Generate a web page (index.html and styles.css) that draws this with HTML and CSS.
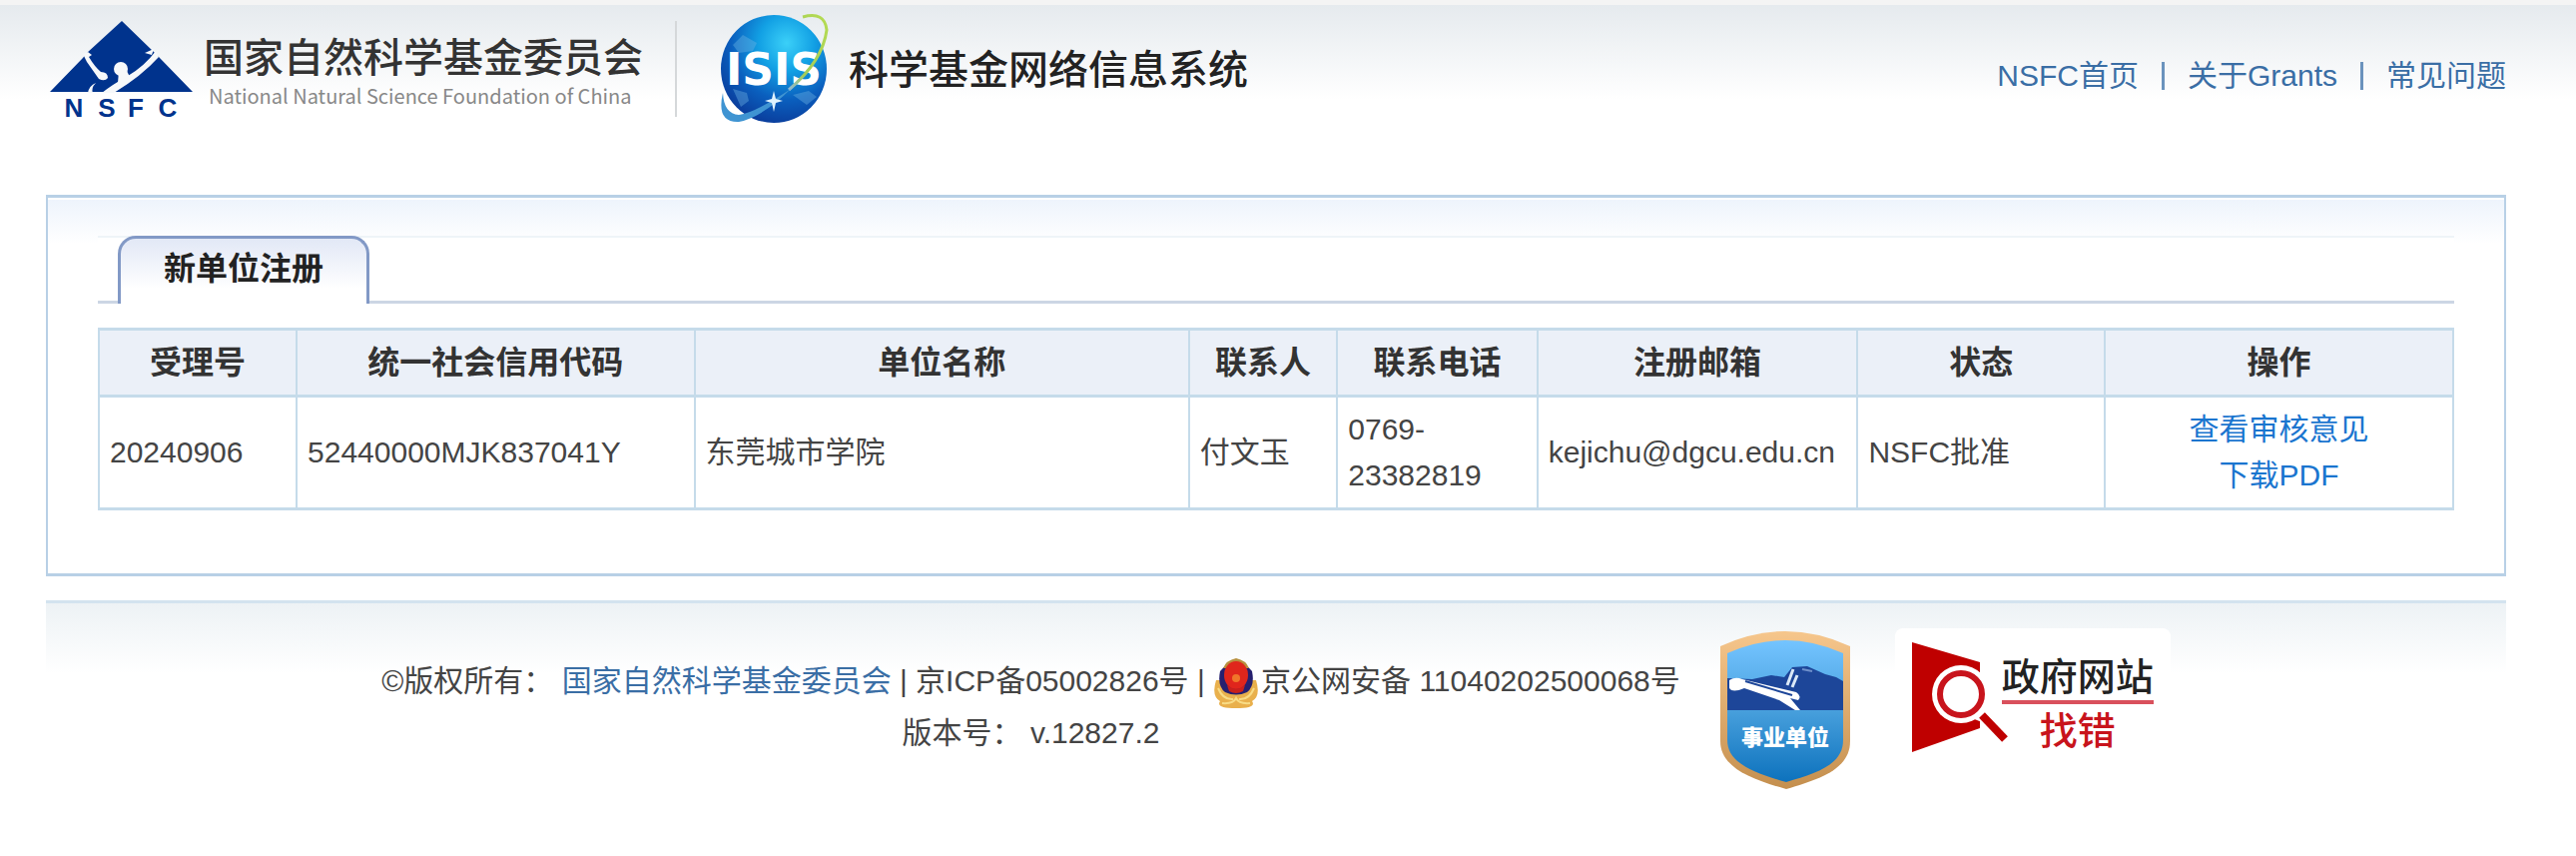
FILE: index.html
```html
<!DOCTYPE html>
<html lang="zh-CN">
<head>
    <meta charset="UTF-8">
    <meta name="viewport" content="width=device-width, initial-scale=1.0">
    <title>科学基金网络信息系统</title>
    <link rel="stylesheet" href="styles.css">
</head>
<body>
    <header class="header">
        <div class="brand">
            <svg class="logo-nsfc" viewBox="0 0 144 110" aria-label="NSFC">
                <path fill="#00338d" d="M72 0 L104 31 L109 36 L143 71 H0 L33 37 L37 32 Z"/>
                <!-- figura branca com os braços abertos -->
                <path fill="#f6f8fa" d="M106 30 Q95 45 78 55 Q62 64 52 72 H64 Q92 55 109 36 Z"/>
                <path fill="#f6f8fa" d="M33 33 L38 31 L42 34 L39 36 Q45 46 51 51 Q58 51 58 57 Q55 61 49 58 L37 41 Z"/>
                <path fill="#f6f8fa" d="M104 28 L95 32 L102 34 Z"/>
                <circle cx="71" cy="48" r="7" fill="#f6f8fa"/>
                <path fill="#f6f8fa" d="M69 50 H77 L80 56 L68 62 Z"/>
                <path fill="#f6f8fa" d="M38 72 Q39 65 46 62 Q41 67 43 72 Z"/>
                <g class="logo-nsfc-text">
                    <text x="24" y="96">N</text>
                    <text x="57" y="96">S</text>
                    <text x="86" y="96">F</text>
                    <text x="118" y="96">C</text>
                </g>
            </svg>
            <div class="brand-name">
                <span class="brand-cn">国家自然科学基金委员会</span>
                <span class="brand-en">National Natural Science Foundation of China</span>
            </div>
            <span class="brand-line"></span>
            <svg class="logo-isis" viewBox="0 0 112 112" aria-label="ISIS">
                <defs>
                    <radialGradient id="globe" cx="62%" cy="26%" r="75%">
                        <stop offset="0" stop-color="#3bd0f8"/>
                        <stop offset="0.35" stop-color="#12a0e4"/>
                        <stop offset="0.7" stop-color="#0a5fbe"/>
                        <stop offset="1" stop-color="#0a3f9e"/>
                    </radialGradient>
                    <linearGradient id="orbit" x1="1" y1="0" x2="0" y2="1">
                        <stop offset="0" stop-color="#b5dc52"/>
                        <stop offset="0.7" stop-color="#a3cc5a"/>
                        <stop offset="1" stop-color="#8fb8d8"/>
                    </linearGradient>
                </defs>
                <ellipse cx="55" cy="56" rx="53" ry="54" fill="url(#globe)"/>
                <path fill="#6fb4e4" opacity="0.4" d="M14 32 L24 22 L38 30 L34 38 L20 40 Z M14 76 L28 80 L30 88 L22 94 Z M74 82 L90 78 L98 84 L88 92 Z"/>
                <text class="logo-isis-text" x="55" y="72">ISIS</text>
                <path fill="none" stroke="url(#orbit)" stroke-width="3" d="M84 4 Q106 -2 108 17 Q104 48 70 77"/>
                <path fill="#3f94d2" d="M4 80 Q5 101 20 102 Q36 100 72 76 Q44 104 20 109 Q-3 110 4 80 Z"/>
                <path fill="#dff2fd" d="M55 78 L57 86 L64 88 L57 90 L55 99 L53 90 L46 88 L53 86 Z"/>
            </svg>
            <span class="system-name">科学基金网络信息系统</span>
        </div>
        <nav class="nav">
            <a href="#">NSFC首页</a>
            <a href="#">关于Grants</a>
            <a href="#">常见问题</a>
        </nav>
    </header>

    <main class="panel">
        <div class="tabs">
            <h1 class="tab">新单位注册</h1>
        </div>
        <table class="list">
            <thead>
                <tr>
                    <th class="w-no">受理号</th>
                    <th class="w-code">统一社会信用代码</th>
                    <th class="w-name">单位名称</th>
                    <th class="w-contact">联系人</th>
                    <th class="w-phone">联系电话</th>
                    <th class="w-mail">注册邮箱</th>
                    <th class="w-status">状态</th>
                    <th>操作</th>
                </tr>
            </thead>
            <tbody>
                <tr>
                    <td>20240906</td>
                    <td>52440000MJK837041Y</td>
                    <td>东莞城市学院</td>
                    <td>付文玉</td>
                    <td>0769-23382819</td>
                    <td>kejichu@dgcu.edu.cn</td>
                    <td>NSFC批准</td>
                    <td class="actions">
                        <a href="#">查看审核意见</a><br>
                        <a href="#">下载PDF</a>
                    </td>
                </tr>
            </tbody>
        </table>
    </main>

    <footer class="footer">
        <div class="copyright">
            <p>©版权所有： <a href="#">国家自然科学基金委员会</a> | 京ICP备05002826号 |
                <svg class="police" viewBox="0 0 46 50" aria-hidden="true">
                    <path fill="#e9b04c" d="M3 22 Q-2 38 7 43 Q2 50 23 50 Q44 50 39 43 Q48 38 43 22 Z"/>
                    <path fill="none" stroke="#f8dc86" stroke-width="2" d="M5 30 Q10 42 20 41 M41 30 Q36 42 26 41 M9 45 Q20 46 23 40 Q26 46 37 45"/>
                    <path fill="#26206f" d="M7 13 Q23 -6 39 13 Q42 28 34 34 Q23 39 12 34 Q4 28 7 13 Z"/>
                    <path fill="#b8903f" d="M23 0 Q33 2 36 10 L10 10 Q13 2 23 0 Z"/>
                    <ellipse cx="23" cy="17" rx="12" ry="14" fill="#e0261c"/>
                    <circle cx="23" cy="20" r="4" fill="#f0752a"/>
                    <path fill="#c9201c" d="M14 27 Q23 34 32 27 L30 33 Q23 37 16 33 Z"/>
                </svg>京公网安备 11040202500068号</p>
            <p>版本号： v.12827.2</p>
        </div>
        <svg class="shield" viewBox="0 0 130 158" aria-label="事业单位">
            <defs>
                <linearGradient id="rim" x2="0" y2="1">
                    <stop offset="0" stop-color="#f6c68c"/>
                    <stop offset="1" stop-color="#c48f4e"/>
                </linearGradient>
                <linearGradient id="sky" x2="0" y2="1">
                    <stop offset="0" stop-color="#74c4ff"/>
                    <stop offset="0.5" stop-color="#479fdc"/>
                    <stop offset="1" stop-color="#0d72bd"/>
                </linearGradient>
            </defs>
            <path fill="url(#rim)" d="M0 15 Q65 -15 130 15 V110 C130 138 100 148 66 158 C30 148 0 136 0 110 Z"/>
            <path fill="url(#sky)" d="M7 22 Q65 -4 123 22 V109 C123 134 96 142 66 151 C34 142 7 132 7 109 Z"/>
            <path fill="#1d4699" d="M7 47 L32 48 L51 44 L64 46 L72 36 L87 35 L105 43 L116 46 L123 50 V79 H7 Z"/>
            <path fill="#fff" d="M9 49 Q15 45 22 48 L76 61 Q82 65 78 69 L70 67 L80 79 H75 L59 69 L24 57 Q12 62 9 57 Z"/>
            <path fill="none" stroke="#1d4699" stroke-width="2" d="M25 50 L72 64"/>
            <path fill="none" stroke="#dbe9f7" stroke-width="3" d="M73 38 L67 54 M77 44 L72 56"/>
            <path fill="none" stroke="#6e8fca" stroke-width="2" d="M82 38 L92 40"/>
            <text class="shield-text" x="65" y="114">事业单位</text>
        </svg>
        <div class="report">
            <svg class="report-icon" viewBox="0 0 96 110" aria-hidden="true">
                <path fill="#bf0000" d="M0 0 L68 20 V86 L0 110 Z"/>
                <circle cx="49" cy="52" r="29" fill="#fff"/>
                <path fill="#fff" d="M64 30 H70 V80 L60 76 Z"/>
                <circle cx="49" cy="52" r="21" fill="#fff" stroke="#c8141c" stroke-width="6"/>
                <path stroke="#bf0000" stroke-width="8" d="M70 73 L93 97"/>
            </svg>
            <div class="report-text">
                <span class="report-site">政府网站</span>
                <span class="report-find">找错</span>
            </div>
        </div>
    </footer>
</body>
</html>
```
FILE: styles.css
```css
* {
    box-sizing: border-box;
}

body {
    margin: 0;
    padding: 0 70px 0 46px;
    border-top: 5px solid #f4f4f4;
    background: linear-gradient(#e4e9ed, #ffffff) no-repeat;
    background-size: 100% 100px;
    background-color: #fff;
    font-family: "Liberation Sans", "Noto Sans CJK SC", sans-serif;
    font-size: 30px;
    line-height: 46px;
    color: #444;
}

a {
    color: #3a6ea5;
    text-decoration: none;
}

/* Topo */
.header {
    display: flex;
    justify-content: space-between;
    align-items: flex-start;
    height: 190px;
}

.brand {
    display: flex;
    align-items: flex-start;
    padding: 8px 0 0 4px;
}

.logo-nsfc {
    width: 144px;
    height: 110px;
    margin-top: 8px;
}

.logo-nsfc-text {
    font-size: 26px;
    font-weight: bold;
    fill: #00338d;
    text-anchor: middle;
}

.brand-name {
    display: flex;
    flex-direction: column;
    margin: 14px 0 0 10px;
    font-family: "Noto Sans CJK SC", sans-serif;
    white-space: nowrap;
}

.brand-cn {
    font-size: 40px;
    line-height: 56px;
    font-weight: 500;
    color: #333;
}

.brand-en {
    padding-left: 5px;
    font-size: 20px;
    line-height: 26px;
    color: #888;
}

.brand-line {
    width: 2px;
    height: 96px;
    margin: 8px 42px 0 32px;
    background-color: #d5d8da;
}

.logo-isis {
    width: 112px;
    height: 112px;
}

.logo-isis-text {
    font-family: "DejaVu Sans", sans-serif;
    font-size: 44px;
    font-weight: bold;
    fill: #fff;
    text-anchor: middle;
}

.system-name {
    margin: 26px 0 0 18px;
    font-family: "Noto Sans CJK SC", sans-serif;
    font-size: 40px;
    font-weight: 500;
    line-height: 56px;
    color: #222;
    white-space: nowrap;
}

.nav {
    display: flex;
    padding-top: 48px;
}

.nav a {
    line-height: 46px;
}

.nav a + a {
    display: flex;
    align-items: center;
}

.nav a + a::before {
    content: "";
    width: 3px;
    height: 28px;
    margin: 0 23px;
    background-color: #6b93bd;
}

/* Painel principal */
.panel {
    padding: 38px 50px 63px;
    border: 2px solid #b8d0e6;
    border-top-width: 3px;
    border-bottom-width: 3px;
    background: linear-gradient(#eef4fc, #ffffff) no-repeat 0 2px;
    background-size: 100% 44px;
}

.tabs {
    display: flex;
    height: 68px;
    margin-bottom: 24px;
    padding-left: 20px;
    border-top: 2px solid #eef4f8;
    border-bottom: 3px solid #ccd6e4;
    background-color: #fff;
}

.tab {
    height: 68px;
    margin: -2px 0 0;
    padding: 0 43px;
    border: 3px solid #8299c6;
    border-bottom: 0;
    border-radius: 18px 18px 0 0;
    background: linear-gradient(#e2e8f6, #ffffff 50px);
    font-size: 32px;
    line-height: 60px;
    color: #222;
}

.list {
    width: 100%;
    border-collapse: collapse;
    table-layout: fixed;
}

.list th,
.list td {
    padding: 9px 10px;
    border: 2px solid #c5dbea;
    border-width: 3px 2px;
    text-align: left;
}

.list th {
    background-color: #ebf0f8;
    font-size: 32px;
    text-align: center;
    color: #333;
}

.list .actions {
    text-align: center;
}

.actions a {
    color: #1a75cf;
}

.w-no { width: 8.4%; }
.w-code { width: 16.9%; }
.w-name { width: 21%; }
.w-contact { width: 6.3%; }
.w-phone { width: 8.5%; }
.w-mail { width: 13.6%; }
.w-status { width: 10.5%; }

/* Rodapé */
.footer {
    display: flex;
    justify-content: center;
    align-items: flex-start;
    margin-top: 24px;
    padding: 25px 0 0;
    border-top: 3px solid #d3e3ef;
    background: linear-gradient(#edf2f5, #ffffff) no-repeat;
    background-size: 100% 70px;
}

.copyright {
    padding-top: 28px;
    text-align: center;
}

.copyright p {
    margin: 0;
    line-height: 50px;
    white-space: nowrap;
}

.police {
    width: 46px;
    height: 50px;
    margin-right: 2px;
    vertical-align: middle;
}

.shield {
    width: 130px;
    height: 158px;
    margin: 3px 45px 0 40px;
}

.shield-text {
    font-family: "Noto Sans CJK SC", sans-serif;
    font-size: 22px;
    font-weight: 900;
    fill: #fff;
    text-anchor: middle;
}

.report {
    display: flex;
    padding: 14px 17px 0;
    border-radius: 8px;
    background-color: #fff;
    font-family: "Noto Sans CJK SC", sans-serif;
}

.report-icon {
    width: 96px;
    height: 110px;
}

.report-text {
    display: flex;
    flex-direction: column;
    align-items: center;
    margin: 6px 0 0 -6px;
    font-size: 38px;
    font-weight: 500;
    line-height: 52px;
}

.report-site {
    border-bottom: 4px solid #d9505c;
    color: #222;
}

.report-find {
    line-height: 48px;
    color: #c8141c;
}
```
